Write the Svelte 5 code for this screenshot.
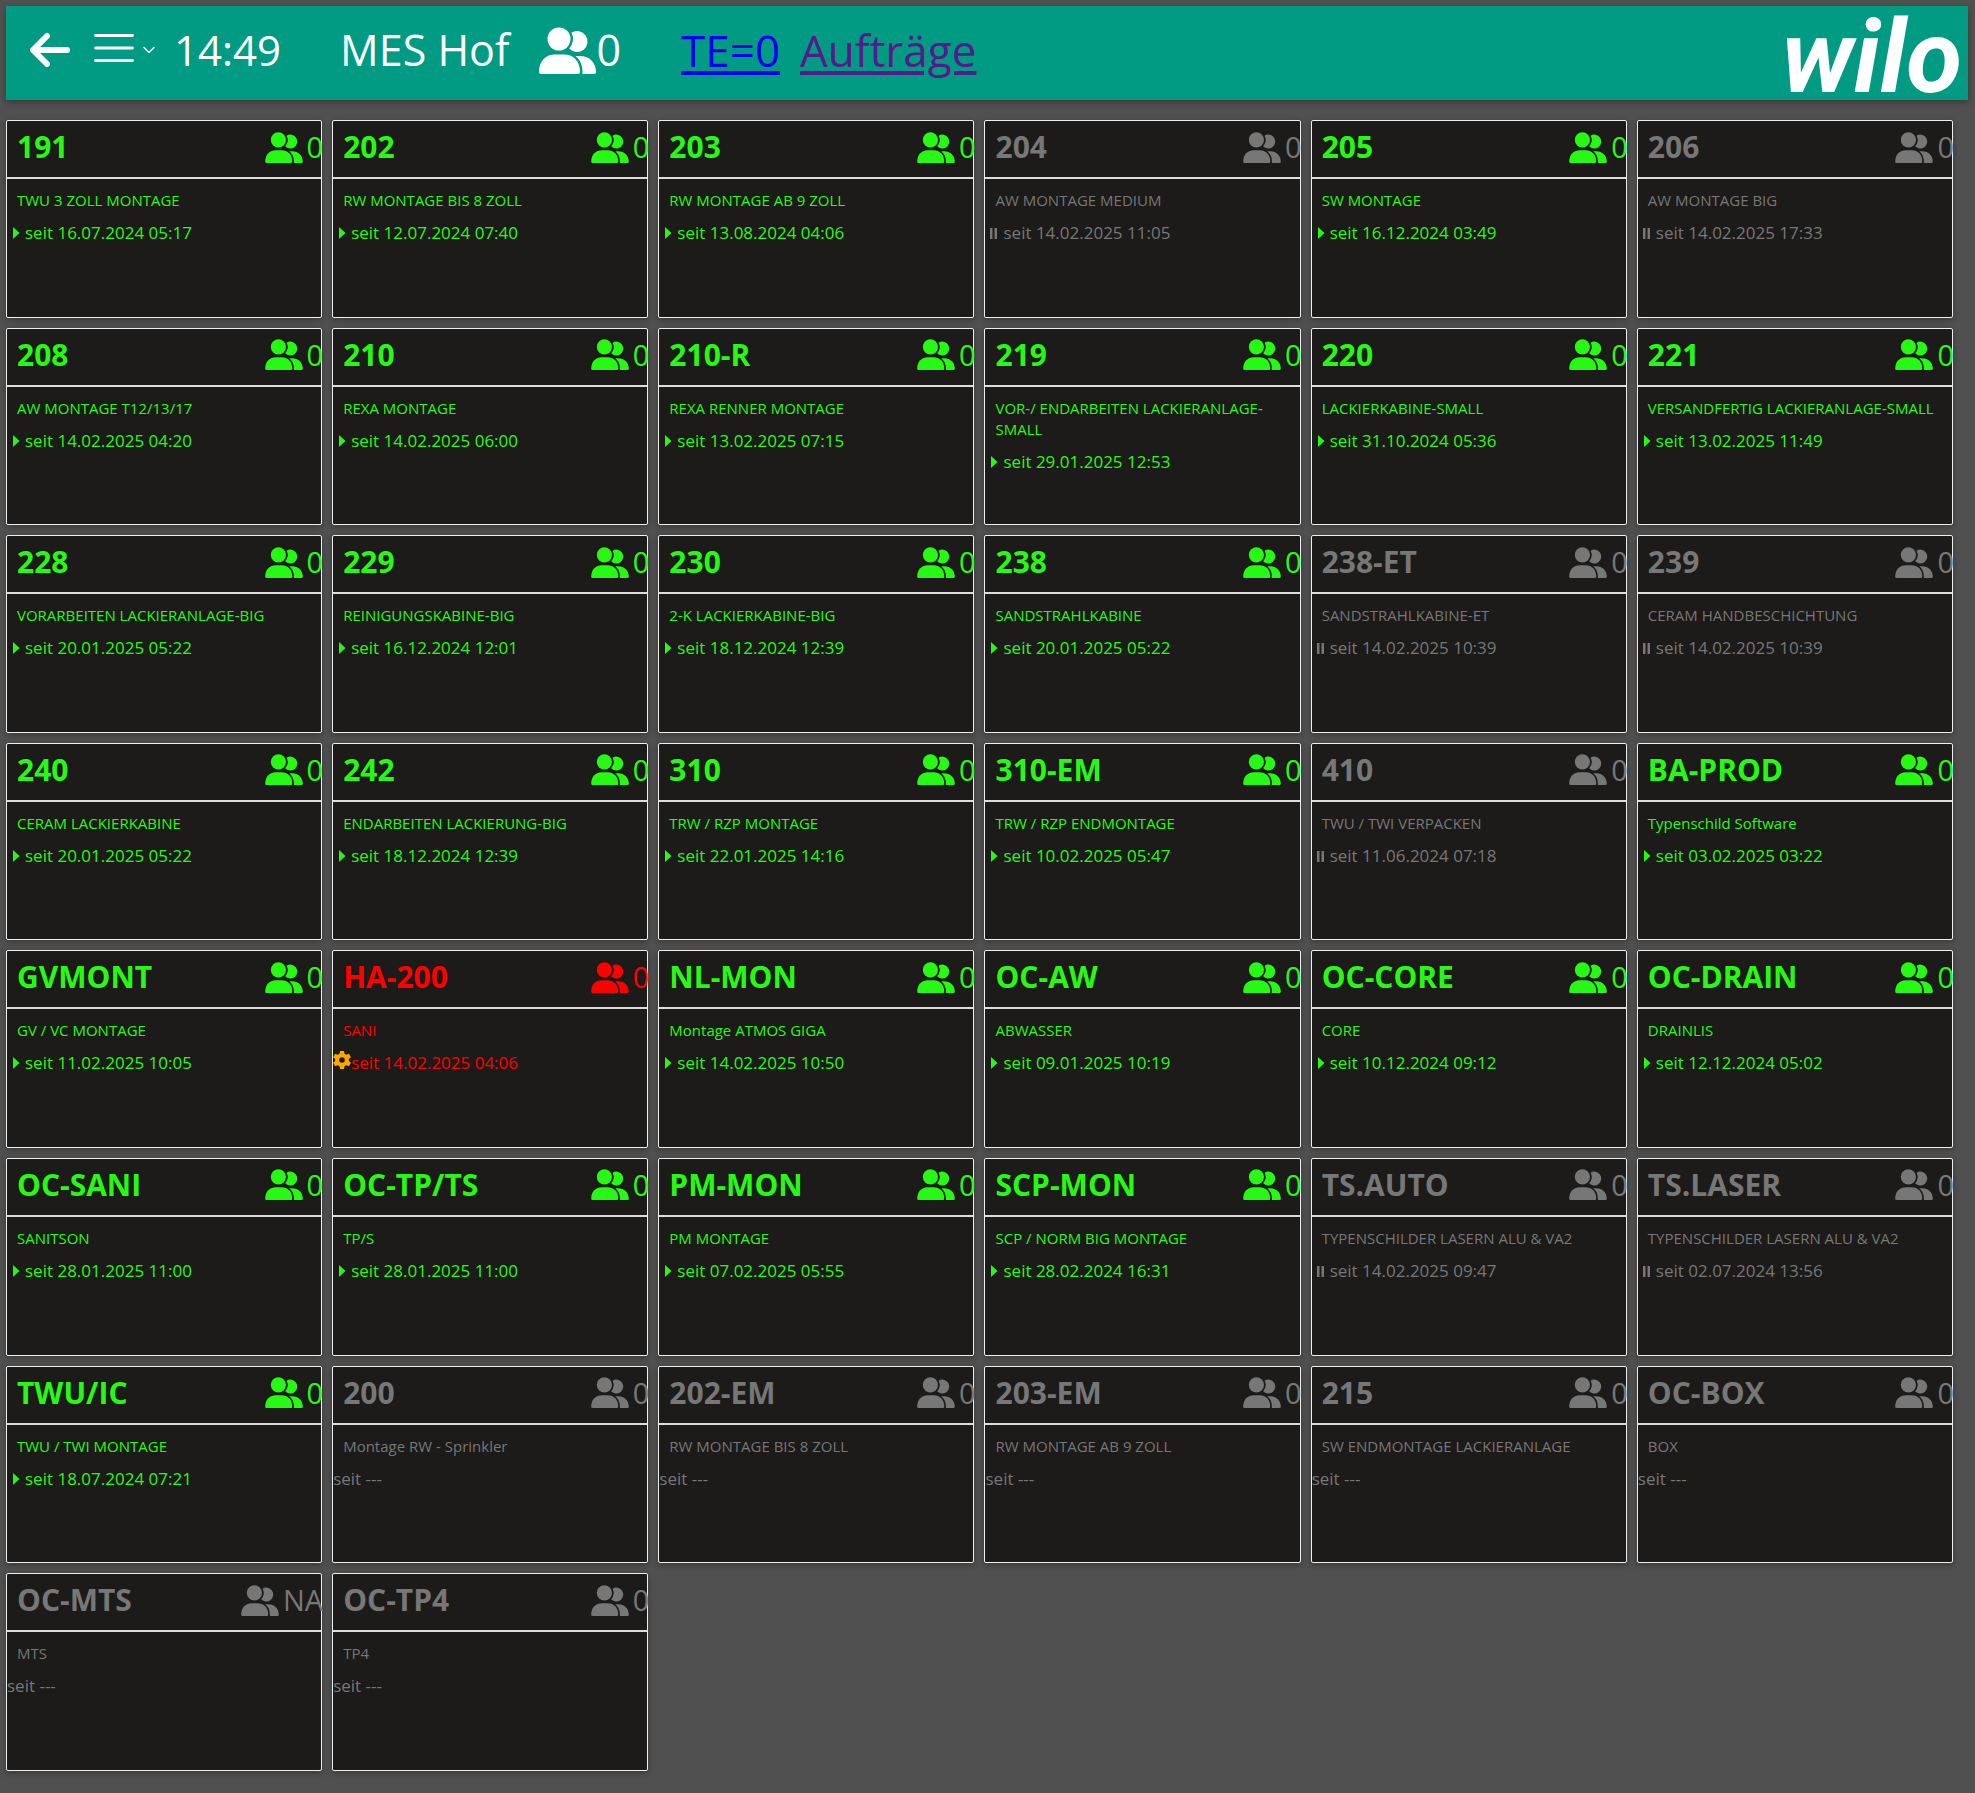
<script>
  const rows = [
    ['191', 'TWU 3 ZOLL MONTAGE', '16.07.2024 05:17', 'run'],
    ['202', 'RW MONTAGE BIS 8 ZOLL', '12.07.2024 07:40', 'run'],
    ['203', 'RW MONTAGE AB 9 ZOLL', '13.08.2024 04:06', 'run'],
    ['204', 'AW MONTAGE MEDIUM', '14.02.2025 11:05', 'pause'],
    ['205', 'SW MONTAGE', '16.12.2024 03:49', 'run'],
    ['206', 'AW MONTAGE BIG', '14.02.2025 17:33', 'pause'],
    ['208', 'AW MONTAGE T12/13/17', '14.02.2025 04:20', 'run'],
    ['210', 'REXA MONTAGE', '14.02.2025 06:00', 'run'],
    ['210-R', 'REXA RENNER MONTAGE', '13.02.2025 07:15', 'run'],
    ['219', 'VOR-/ ENDARBEITEN LACKIERANLAGE-SMALL', '29.01.2025 12:53', 'run'],
    ['220', 'LACKIERKABINE-SMALL', '31.10.2024 05:36', 'run'],
    ['221', 'VERSANDFERTIG LACKIERANLAGE-SMALL', '13.02.2025 11:49', 'run'],
    ['228', 'VORARBEITEN LACKIERANLAGE-BIG', '20.01.2025 05:22', 'run'],
    ['229', 'REINIGUNGSKABINE-BIG', '16.12.2024 12:01', 'run'],
    ['230', '2-K LACKIERKABINE-BIG', '18.12.2024 12:39', 'run'],
    ['238', 'SANDSTRAHLKABINE', '20.01.2025 05:22', 'run'],
    ['238-ET', 'SANDSTRAHLKABINE-ET', '14.02.2025 10:39', 'pause'],
    ['239', 'CERAM HANDBESCHICHTUNG', '14.02.2025 10:39', 'pause'],
    ['240', 'CERAM LACKIERKABINE', '20.01.2025 05:22', 'run'],
    ['242', 'ENDARBEITEN LACKIERUNG-BIG', '18.12.2024 12:39', 'run'],
    ['310', 'TRW / RZP MONTAGE', '22.01.2025 14:16', 'run'],
    ['310-EM', 'TRW / RZP ENDMONTAGE', '10.02.2025 05:47', 'run'],
    ['410', 'TWU / TWI VERPACKEN', '11.06.2024 07:18', 'pause'],
    ['BA-PROD', 'Typenschild Software', '03.02.2025 03:22', 'run'],
    ['GVMONT', 'GV / VC MONTAGE', '11.02.2025 10:05', 'run'],
    ['HA-200', 'SANI', '14.02.2025 04:06', 'fault'],
    ['NL-MON', 'Montage ATMOS GIGA', '14.02.2025 10:50', 'run'],
    ['OC-AW', 'ABWASSER', '09.01.2025 10:19', 'run'],
    ['OC-CORE', 'CORE', '10.12.2024 09:12', 'run'],
    ['OC-DRAIN', 'DRAINLIS', '12.12.2024 05:02', 'run'],
    ['OC-SANI', 'SANITSON', '28.01.2025 11:00', 'run'],
    ['OC-TP/TS', 'TP/S', '28.01.2025 11:00', 'run'],
    ['PM-MON', 'PM MONTAGE', '07.02.2025 05:55', 'run'],
    ['SCP-MON', 'SCP / NORM BIG MONTAGE', '28.02.2024 16:31', 'run'],
    ['TS.AUTO', 'TYPENSCHILDER LASERN ALU & VA2', '14.02.2025 09:47', 'pause'],
    ['TS.LASER', 'TYPENSCHILDER LASERN ALU & VA2', '02.07.2024 13:56', 'pause'],
    ['TWU/IC', 'TWU / TWI MONTAGE', '18.07.2024 07:21', 'run'],
    ['200', 'Montage RW - Sprinkler', '---', 'off'],
    ['202-EM', 'RW MONTAGE BIS 8 ZOLL', '---', 'off'],
    ['203-EM', 'RW MONTAGE AB 9 ZOLL', '---', 'off'],
    ['215', 'SW ENDMONTAGE LACKIERANLAGE', '---', 'off'],
    ['OC-BOX', 'BOX', '---', 'off'],
    ['OC-MTS', 'MTS', '---', 'off', 'NA'],
    ['OC-TP4', 'TP4', '---', 'off'],
  ];
  const stations = rows.map(([id, name, since, state, people = '0']) => ({ id, name, since, state, people }));
</script>

{#snippet peopleIcon()}
  <svg class="people" viewBox="0 0 114 94" aria-hidden="true">
    <circle cx="40" cy="24" r="23" />
    <path d="M64.9 11.2A21 21 0 1 1 60.5 43A28 28 0 0 0 64.9 11.2Z" />
    <path d="M4 94Q0 94 0 90C0 67 14 55 32 55H50C68 55 82 67 82 90Q82 94 78 94Z" />
    <path d="M73 58H82C101 58 114 71 114 90Q114 94 110 94H87V89C87 76 82 65 73 58Z" />
  </svg>
{/snippet}

<header>
  <button class="back" aria-label="Zurück">
    <svg width="40" height="36" viewBox="0 0 40 36"><path d="M37 18H4M17 4L3 18L17 32" fill="none" stroke="currentColor" stroke-width="6" stroke-linecap="round" stroke-linejoin="round" /></svg>
  </button>
  <button class="menu" aria-label="Menü">
    <svg width="60" height="30" viewBox="0 0 60 30" fill="none" stroke="currentColor" stroke-linecap="round">
      <path d="M1.500 2.500H38.500M1.500 15H38.500M1.500 27.500H38.500" stroke-width="2.800" />
      <path d="M50 14.500L55 19.500L60 14.500" stroke-width="1.400" stroke-linejoin="round" />
    </svg>
  </button>
  <time>14:49</time>
  <h1>MES Hof</h1>
  <span class="total">{@render peopleIcon()}0</span>
  <nav>
    <a class="te" href="#te">TE=0</a>
    <a class="orders" href="#auftraege">Aufträge</a>
  </nav>
  <strong class="logo">wilo</strong>
</header>

<main>
  {#each stations as s}
    <article class={s.state}>
      <div class="head">
        <h2>{s.id}</h2>
        <span class="count">{@render peopleIcon()}{s.people}</span>
      </div>
      <p class="name">{s.name}</p>
      <p class="since">
        {#if s.state === 'run'}
          <svg viewBox="0 0 18 18" aria-hidden="true"><path d="M6 6L12.500 12L6 18Z" /></svg>
        {:else if s.state === 'pause'}
          <svg viewBox="0 0 18 18" aria-hidden="true"><path d="M5 7H7.500V18H5ZM9.500 7H12V18H9.500Z" /></svg>
        {:else if s.state === 'fault'}
          <svg class="gear" viewBox="0 0 18 18" aria-hidden="true">
            <path fill-rule="evenodd" d="M7 0H11L11.500 2.700L13.200 3.700L15.900 2.800L17.900 6.200L15.900 8V10L17.900 11.800L15.900 15.200L13.200 14.300L11.500 15.300L11 18H7L6.500 15.300L4.800 14.300L2.100 15.200L.1 11.800L2.100 10V8L.1 6.200L2.100 2.800L4.800 3.700L6.500 2.700ZM9 6.200A2.800 2.800 0 1 0 9 11.800A2.800 2.800 0 1 0 9 6.200Z" />
          </svg>
        {/if}
        <span>seit {s.since}</span>
      </p>
    </article>
  {/each}
</main>

<style>
  :global(body) {
    background: #505050;
    font-family: 'Segoe UI', 'Open Sans', 'Noto Sans', sans-serif;
  }
  h1, h2, p { margin: 0; }
  svg { display: block; fill: currentColor; flex: none; }
  header {
    display: flex;
    align-items: center;
    height: 94px;
    box-sizing: border-box;
    margin: 6px 7px 20px 6px;
    padding: 0 6px 6px 24px;
    background: #009b82;
    color: #fff;
    font-size: 43px;
    line-height: 60px;
    box-shadow: 0 2px 6px rgba(0, 0, 0, 0.3);
    white-space: nowrap;
  }
  button {
    padding: 0;
    border: 0;
    background: none;
    color: inherit;
    cursor: pointer;
  }
  .back { margin-right: 24px; }
  .menu { margin-right: 20px; padding-bottom: 4px; }
  .menu svg { fill: none; overflow: visible; }
  time { font-size: 42px; }
  h1 { font-size: inherit; font-weight: 400; margin: 0 30px 0 59px; }
  .total { display: flex; align-items: center; }
  .total .people { width: 57px; height: 47px; }
  nav { display: flex; gap: 20px; margin-left: 60px; font-size: 44px; }
  a { text-decoration-thickness: 4px; text-underline-offset: 4px; }
  .te { color: #0000ee; }
  .orders { color: #551a8b; }
  .logo {
    margin-left: auto;
    padding-top: 14px;
    font: italic 700 102px/80px Roboto, sans-serif;
  }
  main {
    display: grid;
    grid-template-columns: repeat(6, minmax(0, 1fr));
    gap: 10px;
    padding: 0 22px 20px 6px;
  }
  article {
    box-sizing: border-box;
    aspect-ratio: 8 / 5;
    border: 1px solid #eee;
    border-radius: 2px;
    background: #1c1b19;
    color: #777;
    box-shadow: 0 2px 6px rgba(0, 0, 0, 0.3);
  }
  .run { color: #26fa14; }
  .fault { color: #f00; }
  .head {
    display: flex;
    align-items: center;
    justify-content: space-between;
    box-sizing: border-box;
    height: 58px;
    padding: 0 0 4px 10px;
    border-bottom: 2px solid #ddd;
    font-size: 30px;
    line-height: 40px;
  }
  h2 { font-size: inherit; font-weight: 700; }
  .count { display: flex; align-items: center; gap: 4px; margin-right: -2px; font-size: 29px; }
  .count .people { width: 38px; height: 31px; }
  .name {
    padding: 11px 10px 0;
    font-size: 15px;
    line-height: 21px;
  }
  .since {
    display: flex;
    margin-top: 10px;
    font-size: 17px;
    line-height: 24px;
  }
  .since svg { width: 18px; height: 18px; }
  .gear { color: #ffa500; }
</style>
